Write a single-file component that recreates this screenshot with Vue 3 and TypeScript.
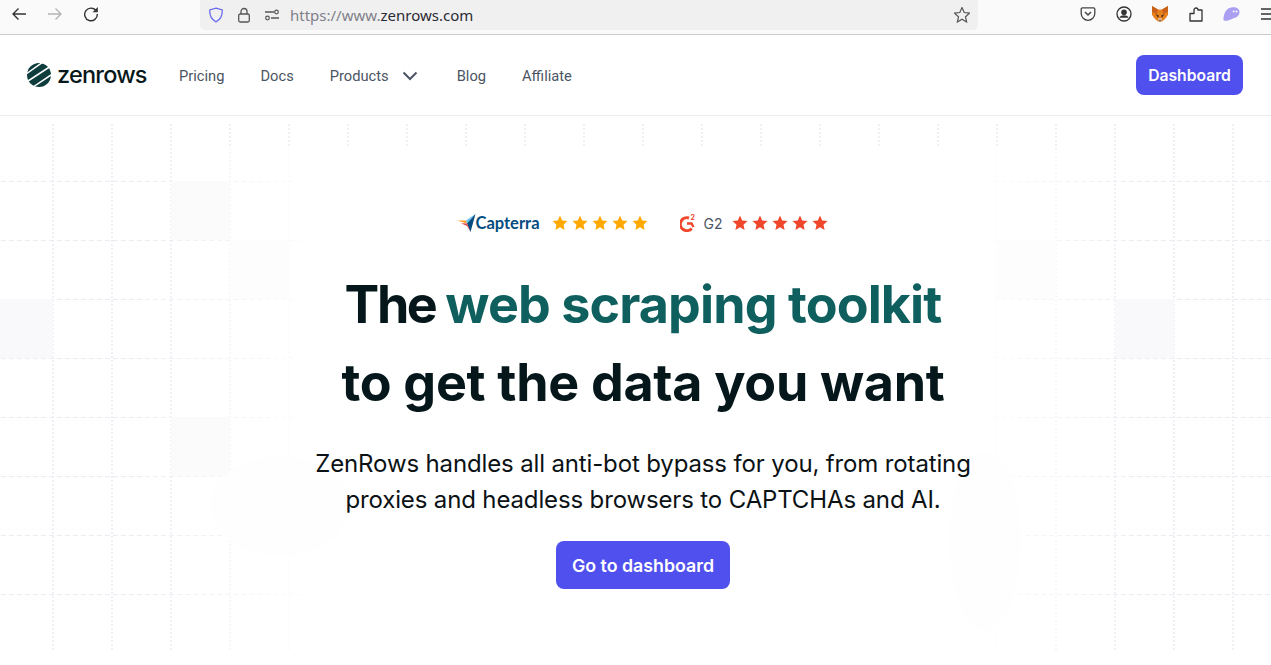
<script setup lang="ts">
const navLinks = ['Pricing', 'Docs', 'Products', 'Blog', 'Affiliate']
const stars = [0, 1, 2, 3, 4]
const starPath = 'M8 .6l2.2 4.9 5.3.6-4 3.6 1.1 5.3L8 12.3 3.4 15l1.1-5.3-4-3.6 5.3-.6z'

// background grid, 59px cells
const verticals = Array.from({ length: 21 }, (_, i) => 53 + i * 59)
const horizontals = Array.from({ length: 8 }, (_, i) => 65 + i * 59)

const shadedCells = [
  { x: 171, y: 65, w: 59, color: '#fbfbfc' },
  { x: 230, y: 124, w: 59, color: '#fdfdfd' },
  { x: 0, y: 183, w: 53, color: '#f9f9fb' },
  { x: 171, y: 301, w: 59, color: '#fbfbfc' },
  { x: 997, y: 124, w: 59, color: '#fdfdfd' },
  { x: 1115, y: 183, w: 59, color: '#f9f9fb' },
]
</script>

<template>
  <div class="window">
    <div class="toolbar">
      <svg class="tb-icon" viewBox="0 0 16 16"><path d="M15 8H2M7.5 2.5 2 8l5.500 5.500" fill="none" stroke="#333" stroke-width="1.400" /></svg>
      <svg class="tb-icon" viewBox="0 0 16 16"><path d="M1 8h13M8.500 2.500 14 8l-5.500 5.500" fill="none" stroke="#b4b4b6" stroke-width="1.400" /></svg>
      <svg class="tb-icon" viewBox="0 0 16 16"><path d="M13.300 5A6.300 6.300 0 1 0 14.300 8" fill="none" stroke="#333" stroke-width="1.400" /><path d="M14.800 1v5.200H9.600z" fill="#333" /></svg>

      <div class="urlbar">
        <svg class="tb-icon" viewBox="0 0 16 16"><path d="M8 1.200 14.300 3c.2 5.500-1.700 9.500-6.300 11.800C3.400 12.500 1.500 8.500 1.700 3z" fill="none" stroke="#6b6bf0" stroke-width="1.300" /></svg>
        <svg class="tb-icon" viewBox="0 0 16 16"><rect x="2.700" y="7" width="10.600" height="8" rx="1.500" fill="none" stroke="#555" stroke-width="1.300" /><path d="M5 7V4.500a3 3 0 0 1 6 0V7" fill="none" stroke="#555" stroke-width="1.300" /></svg>
        <svg class="tb-icon" viewBox="0 0 16 16"><path d="M1 5h9M7 11h8" stroke="#555" stroke-width="1.300" /><circle cx="12.500" cy="5" r="1.800" fill="none" stroke="#555" stroke-width="1.200" /><circle cx="3.500" cy="11" r="1.800" fill="none" stroke="#555" stroke-width="1.200" /></svg>
        <span class="url"><span class="url-dim">https://www.</span>zenrows.com</span>
        <svg class="tb-icon star-btn" viewBox="0 0 16 16"><path :d="starPath" fill="none" stroke="#555" stroke-width="1.200" /></svg>
      </div>

      <div class="tb-right">
        <svg class="tb-icon" viewBox="0 0 16 16"><path d="M2.500 1.800h11c.8 0 1.300.5 1.300 1.300v4.400a6.800 6.800 0 0 1-13.600 0V3.100c0-.8.500-1.300 1.300-1.300z" fill="none" stroke="#444" stroke-width="1.300" /><path d="M5 6l3 3 3-3" fill="none" stroke="#444" stroke-width="1.500" /></svg>
        <svg class="tb-icon" viewBox="0 0 16 16"><circle cx="8" cy="8" r="7" fill="none" stroke="#333" stroke-width="1.300" /><circle cx="8" cy="6.200" r="2.800" fill="#333" /><path d="M3.300 11.800c1-1.800 2.600-2.500 4.700-2.500s3.700.7 4.700 2.500z" fill="#333" /></svg>
        <svg class="tb-icon" viewBox="0 0 16 16">
          <path d="M0 0 6 3.500h4L16 0v9l-3 4-3 2.500H6L3 13 0 9z" fill="#e8821e" />
          <path d="M0 0 6 3.500 5 8 0 6zM16 0 10 3.500 11 8l5-2z" fill="#c9611a" />
          <path d="M3.500 8 7 9.800 6 11.800zM12.500 8 9 9.800l1 2z" fill="#4a2d18" />
          <path d="M6 12.500h4l-.8 2.500H6.800z" fill="#d7c1b3" />
          <path d="M7.200 14.300h1.600v1H7.200z" fill="#222" />
        </svg>
        <svg class="tb-icon" viewBox="0 0 16 16"><path d="M2 15V7.500h4V4a2 2 0 1 1 4 0h4v11z" fill="none" stroke="#333" stroke-width="1.300" stroke-linejoin="round" /></svg>
        <svg class="tb-icon ghost" viewBox="0 0 18 16"><path d="M.5 14.500C.5 8 3 1.200 10 .8c4.500-.2 7.500 1.700 7.500 5 0 3.700-3 6-6.500 6.700-2.500 1.500-6.800 3.500-10.500 2z" fill="#ab9ff2" /><circle cx="11.300" cy="5.300" r="1" fill="#fff" /><circle cx="14.300" cy="5.300" r="1" fill="#fff" /></svg>
        <svg class="tb-icon" viewBox="0 0 16 16"><path d="M1 3h14M1 8h14M1 13h14" stroke="#333" stroke-width="1.400" /></svg>
      </div>
    </div>

    <header class="site-nav">
      <a class="logo">
        <svg class="logo-mark" viewBox="0 0 24 24">
          <circle cx="12" cy="12" r="12" fill="#0f3d3e" />
          <path d="M-1 11 16-1M1 18 24 3M6 24 27 10" stroke="#fff" stroke-width="1.500" />
        </svg>
        <span class="logo-word">zenrows</span>
      </a>
      <nav class="links">
        <a v-for="link in navLinks" :key="link" class="link">
          {{ link }}
          <svg v-if="link === 'Products'" class="chevron" viewBox="0 0 16 10"><path d="M1.500 1.500 8 8l6.500-6.500" fill="none" stroke="#4b5563" stroke-width="2" /></svg>
        </a>
      </nav>
      <a class="btn btn-nav">Dashboard</a>
    </header>

    <main class="hero">
      <div class="hero-bg">
        <svg class="grid-lines" width="1271" height="549">
          <line v-for="x in verticals" :key="x" :x1="x" :x2="x" y1="8" y2="535" stroke="#f0f0f4" stroke-width="2" stroke-dasharray="2 2" />
          <line v-for="y in horizontals" :key="y" x1="1" x2="1271" :y1="y + 0.5" :y2="y + 0.5" stroke="#ebebf4" stroke-width="1" stroke-dasharray="5 3" />
        </svg>
        <div class="grid-fade"></div>
        <div
          v-for="cell in shadedCells"
          :key="`${cell.x}-${cell.y}`"
          class="cell"
          :style="{ left: `${cell.x}px`, top: `${cell.y}px`, width: `${cell.w}px`, background: cell.color }"
        ></div>
        <svg class="ghost-shapes" width="1271" height="549">
          <ellipse cx="985" cy="425" rx="36" ry="90" fill="#fefefe" />
          <ellipse cx="280" cy="390" rx="70" ry="50" fill="#fefefe" />
        </svg>
      </div>

      <div class="ratings">
        <div class="rating">
          <svg class="capterra-mark" viewBox="0 0 19 18">
            <path d="M0 6.500 9 6.500 10 9.500z" fill="#ff9d28" />
            <path d="M9 6.500 18.500 0 10 9.500z" fill="#68c5ed" />
            <path d="M10 9.500 18.500 0 13.500 18z" fill="#044d80" />
            <path d="M4 9.300 10 9.500 13.500 18 10 12z" fill="#e54747" />
          </svg>
          <span class="capterra-word">Capterra</span>
          <div class="stars">
            <svg v-for="n in stars" :key="n" class="star" viewBox="0 0 16 16"><path :d="starPath" fill="#ffa800" /></svg>
          </div>
        </div>
        <div class="rating">
          <svg class="g2-mark" viewBox="0 0 16 18">
            <path d="M11.700 14.500A6.500 6.500 0 1 1 9 4" fill="none" stroke="#f0472c" stroke-width="3" />
            <path d="M7 9.500h4.500l2 3.500" fill="none" stroke="#f0472c" stroke-width="2.400" />
            <text x="10.500" y="5.800" class="g2-sup">2</text>
          </svg>
          <span class="g2-word">G2</span>
          <div class="stars">
            <svg v-for="n in stars" :key="n" class="star" viewBox="0 0 16 16"><path :d="starPath" fill="#f0472c" /></svg>
          </div>
        </div>
      </div>

      <h1 class="title">
        <span class="line-one">The <span class="accent">web scraping toolkit</span></span>
        <span class="line-two">to get the data you want</span>
      </h1>

      <p class="lead">
        ZenRows handles all anti-bot bypass for you, from rotating<br />
        proxies and headless browsers to CAPTCHAs and AI.
      </p>

      <a class="btn btn-hero">Go to dashboard</a>
    </main>
  </div>
</template>

<style>
html,
body {
  background: #fff;
  margin: 0;
  overflow: hidden;
}
</style>

<style scoped>
.window {
  font-family: Inter, "Liberation Sans", sans-serif;
  height: 665px;
  overflow: hidden;
  width: 1271px;
}

.toolbar {
  align-items: flex-start;
  background: #fafafa;
  border-bottom: 1px solid #ccc;
  box-sizing: border-box;
  display: flex;
  gap: 20px;
  height: 35px;
  padding: 6px 0 0 11px;
}

.tb-icon {
  flex: none;
  height: 16px;
  width: 16px;
}

.urlbar {
  align-items: center;
  background: #f0f0f0;
  border-radius: 0 0 5px 5px;
  box-sizing: border-box;
  display: flex;
  flex: none;
  gap: 12px;
  height: 30px;
  margin: -6px 0 0 81px;
  padding: 0 8px;
  width: 778px;
}

.url {
  color: #2b2a33;
  font-family: "Noto Sans", sans-serif;
  font-size: 15px;
  margin-left: -2px;
}

.url-dim {
  color: #80808a;
}

.star-btn {
  margin-left: auto;
}

.tb-right {
  display: flex;
  flex: none;
  gap: 20px;
  margin-left: 82px;
}

.ghost {
  margin: 0 0 0 -1px;
  width: 17px;
}

.site-nav {
  align-items: center;
  border-bottom: 1px solid #ececec;
  box-sizing: border-box;
  display: flex;
  height: 81px;
  padding: 0 28px 0 27px;
}

.logo {
  align-items: center;
  display: flex;
  gap: 6px;
  width: 152px;
}

.logo-mark {
  flex: none;
  height: 24px;
  width: 24px;
}

.logo-word {
  color: #07181a;
  font-size: 23.500px;
  font-weight: 500;
  letter-spacing: -0.8px;
  line-height: 24px;
}

.links {
  display: flex;
  gap: 36px;
  padding-top: 1px;
}

.link {
  align-items: center;
  color: #4b5563;
  display: flex;
  font-family: Roboto, sans-serif;
  font-size: 14.700px;
  font-weight: 400;
}

.chevron {
  height: 10px;
  margin: 0 3px 0 13px;
  width: 16px;
}

.btn {
  background: #5050ee;
  border-radius: 8px;
  color: #fff;
  font-weight: 600;
  text-align: center;
}

.btn-nav {
  font-size: 15.700px;
  height: 40px;
  line-height: 41px;
  margin-left: auto;
  width: 107px;
}

.hero {
  align-items: center;
  box-sizing: border-box;
  display: flex;
  flex-direction: column;
  height: 549px;
  padding: 96px 0 0 15px;
  position: relative;
}

.hero-bg {
  inset: 0;
  position: absolute;
}

.grid-lines {
  display: block;
}

.grid-fade {
  background: linear-gradient(90deg, transparent 140px, #fff 330px, #fff 965px, transparent 1130px);
  bottom: 0;
  left: 0;
  position: absolute;
  right: 0;
  top: 30px;
}

.cell {
  height: 59px;
  position: absolute;
}

.ghost-shapes {
  left: 0;
  position: absolute;
  top: 0;
}

.ratings {
  align-items: center;
  display: flex;
  gap: 32px;
  height: 22px;
  margin-right: 2px;
  position: relative;
}

.rating {
  align-items: center;
  display: flex;
}

.capterra-mark {
  height: 18px;
  width: 19px;
}

.capterra-word {
  color: #044d80;
  font-family: Lato, sans-serif;
  font-size: 16.500px;
  font-weight: 700;
  margin-right: 12px;
}

.stars {
  display: flex;
  gap: 4px;
}

.star {
  height: 16px;
  width: 16px;
}

.g2-mark {
  height: 18px;
  width: 16px;
}

.g2-sup {
  fill: #f0472c;
  font-family: Inter, sans-serif;
  font-size: 7px;
  font-weight: 700;
}

.g2-word {
  color: #4b5563;
  font-size: 14px;
  margin: 0 9px 0 8px;
}

.title {
  color: #05171a;
  display: flex;
  flex-direction: column;
  font-size: 52px;
  font-weight: 700;
  line-height: 78px;
  margin: 32px 0 0;
  position: relative;
  text-align: center;
}

.line-one {
  letter-spacing: -2.400px;
}

.line-two {
  letter-spacing: -0.3px;
}

.accent {
  color: #0f5f5f;
  letter-spacing: -0.900px;
}

.lead {
  color: #0b1215;
  font-size: 24px;
  letter-spacing: -0.14px;
  line-height: 36px;
  margin: 24px 0 0;
  position: relative;
  text-align: center;
}

.btn-hero {
  font-size: 17.800px;
  height: 48px;
  line-height: 49px;
  margin-top: 23px;
  position: relative;
  width: 174px;
}
</style>
